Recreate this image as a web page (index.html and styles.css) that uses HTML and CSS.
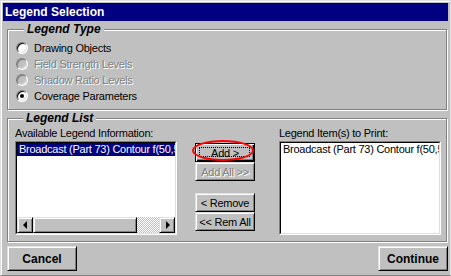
FILE: index.html
```html
<!DOCTYPE html>
<html lang="en">
<head>
  <meta charset="UTF-8" />
  <title>Legend Selection</title>
  <link rel="stylesheet" href="styles.css">
</head>
<body>
  <div class="window">
    <div class="titlebar">Legend Selection</div>
    <div class="content">
      <fieldset class="group group-type">
        <legend>Legend Type</legend>
        <div class="option"><span class="radio"></span>Drawing Objects</div>
        <div class="option disabled"><span class="radio"></span>Field Strength Levels</div>
        <div class="option disabled"><span class="radio"></span>Shadow Ratio Levels</div>
        <div class="option"><span class="radio checked"></span>Coverage Parameters</div>
      </fieldset>

      <fieldset class="group group-list">
        <legend>Legend List</legend>
        <div class="list-cols">
          <div class="list-col">
            <div class="list-label">Available Legend Information:</div>
            <div class="listbox">
              <div class="listbox-inner">
                <div class="items">
                  <div class="item selected">Broadcast (Part 73) Contour f(50,50)</div>
                </div>
                <div class="hscroll">
                  <div class="sb-btn"><span class="arrow-left"></span></div>
                  <div class="sb-thumb"></div>
                  <div class="sb-track"></div>
                  <div class="sb-btn"><span class="arrow-right"></span></div>
                </div>
              </div>
            </div>
          </div>

          <div class="btn-col">
            <div class="btn-pair">
              <div class="btn-wrap">
                <button class="btn focused">Add &gt;</button>
                <span class="highlight"></span>
              </div>
              <button class="btn disabled">Add All &gt;&gt;</button>
            </div>
            <div class="btn-pair">
              <button class="btn">&lt; Remove</button>
              <button class="btn">&lt;&lt; Rem All</button>
            </div>
          </div>

          <div class="list-col">
            <div class="list-label">Legend Item(s) to Print:</div>
            <div class="listbox">
              <div class="listbox-inner">
                <div class="items">
                  <div class="item">Broadcast (Part 73) Contour f(50,50)</div>
                </div>
              </div>
            </div>
          </div>
        </div>
      </fieldset>

      <div class="footer">
        <button class="btn big">Cancel</button>
        <button class="btn big">Continue</button>
      </div>
    </div>
  </div>
</body>
</html>
```

FILE: styles.css
```css
body {
  margin: 0;
  background-color: #c0c0c0;
  font-family: "Liberation Sans", Arial, sans-serif;
  font-size: 11px;
  letter-spacing: -0.25px;
  color: #000;
}

.window {
  width: 451px;
  height: 276px;
  box-sizing: border-box;
  padding: 2px;
  border: 1px solid;
  border-color: #dfdfdf #dfdfdf #808080 #dfdfdf;
  box-shadow: inset 1px 1px #fff;
  overflow: hidden;
}

.titlebar {
  height: 18px;
  line-height: 18px;
  padding-left: 2px;
  background-color: #000080;
  color: #fff;
  font-weight: bold;
  font-size: 12px;
  letter-spacing: 0;
}

.content {
  padding-left: 4px;
}

/* etched group boxes */
.group {
  margin: 0;
  min-width: 0;
  width: 440px;
  box-sizing: border-box;
  border: 1px solid #808080;
  box-shadow: inset 1px 1px #fff, 1px 1px #fff;
}

.group legend {
  margin-left: 8px;
  padding: 0 3px;
  font-size: 12px;
  font-weight: bold;
  font-style: italic;
  line-height: 14px;
  letter-spacing: 0;
  background-color: #c0c0c0;
}

.group-type {
  margin-top: 1px;
  padding: 4px 0 5px 8px;
}

.option {
  display: flex;
  align-items: center;
  height: 16px;
}

.option.disabled {
  color: #808080;
  text-shadow: 1px 1px 0 #fff;
}

.radio {
  position: relative;
  width: 12px;
  height: 12px;
  box-sizing: border-box;
  margin-right: 6px;
  border-radius: 50%;
  border: 1px solid;
  border-color: #808080 #fff #fff #808080;
  background-color: #fff;
  box-shadow: inset 1px 1px #000, inset -1px -1px #dfdfdf;
}

.option.disabled .radio {
  background-color: #c0c0c0;
  box-shadow: inset 1px 1px #808080, inset -1px -1px #dfdfdf;
}

.radio.checked::after {
  content: "";
  position: absolute;
  left: 3px;
  top: 3px;
  width: 4px;
  height: 4px;
  border-radius: 50%;
  background-color: #000;
}

.group-list {
  margin-top: 1px;
  padding: 2px 0 6px 7px;
}

.list-cols {
  display: flex;
  align-items: flex-start;
}

.list-col {
  width: 162px;
}

.list-label {
  line-height: 13px;
  margin-bottom: 1px;
  white-space: nowrap;
}

.listbox {
  height: 94px;
  box-sizing: border-box;
  border: 1px solid;
  border-color: #808080 #fff #fff #808080;
}

.listbox-inner {
  height: 100%;
  box-sizing: border-box;
  display: flex;
  flex-direction: column;
  border: 1px solid;
  border-color: #000 #dfdfdf #dfdfdf #000;
  background-color: #fff;
  overflow: hidden;
}

.items {
  flex: 1;
  overflow: hidden;
}

.item {
  height: 13px;
  line-height: 13px;
  padding-left: 2px;
  white-space: nowrap;
}

.item.selected {
  background-color: #000080;
  color: #fff;
}

.hscroll {
  display: flex;
  height: 16px;
}

.sb-btn,
.sb-thumb,
.btn {
  background-color: #c0c0c0;
  border: 1px solid;
  border-color: #dfdfdf #000 #000 #dfdfdf;
  box-shadow: inset 1px 1px #fff, inset -1px -1px #808080;
  box-sizing: border-box;
}

.sb-btn {
  width: 16px;
  display: flex;
  align-items: center;
  justify-content: center;
}

.arrow-left {
  border-top: 4px solid transparent;
  border-bottom: 4px solid transparent;
  border-right: 4px solid #000;
  margin-left: -1px;
}

.arrow-right {
  border-top: 4px solid transparent;
  border-bottom: 4px solid transparent;
  border-left: 4px solid #000;
  margin-left: 1px;
}

.sb-thumb {
  width: 104px;
}

.sb-track {
  flex: 1;
  background: repeating-conic-gradient(#c0c0c0 0 25%, #fff 0 50%) 0 0 / 2px 2px;
}

.btn-col {
  width: 60px;
  margin: 0 24px 0 18px;
  padding-top: 16px;
}

.btn-pair {
  display: flex;
  flex-direction: column;
}

.btn-pair + .btn-pair {
  margin-top: 12px;
}

.btn-wrap {
  position: relative;
}

.btn {
  display: block;
  width: 60px;
  height: 19px;
  padding: 0;
  font-family: inherit;
  font-size: 11px;
  letter-spacing: -0.25px;
  color: #000;
}

.btn.disabled {
  color: #808080;
  text-shadow: 1px 1px 0 #fff;
}

.btn.focused {
  position: relative;
  border-color: #000;
  box-shadow: inset 1px 1px #fff, inset -1px -1px #000, inset -2px -2px #808080;
}

.btn.focused::after {
  content: "";
  position: absolute;
  left: 3px;
  top: 3px;
  right: 4px;
  bottom: 4px;
  border: 1px dotted #000;
}

/* red annotation ring around the Add button */
.highlight {
  position: absolute;
  left: -3px;
  top: -3px;
  width: 62px;
  height: 21px;
  box-sizing: border-box;
  border: 2px solid #f00;
  border-radius: 50%;
}

.footer {
  display: flex;
  justify-content: space-between;
  margin-top: 4px;
}

.btn.big {
  width: 70px;
  height: 25px;
  font-size: 12px;
  font-weight: bold;
  letter-spacing: 0;
}
```
